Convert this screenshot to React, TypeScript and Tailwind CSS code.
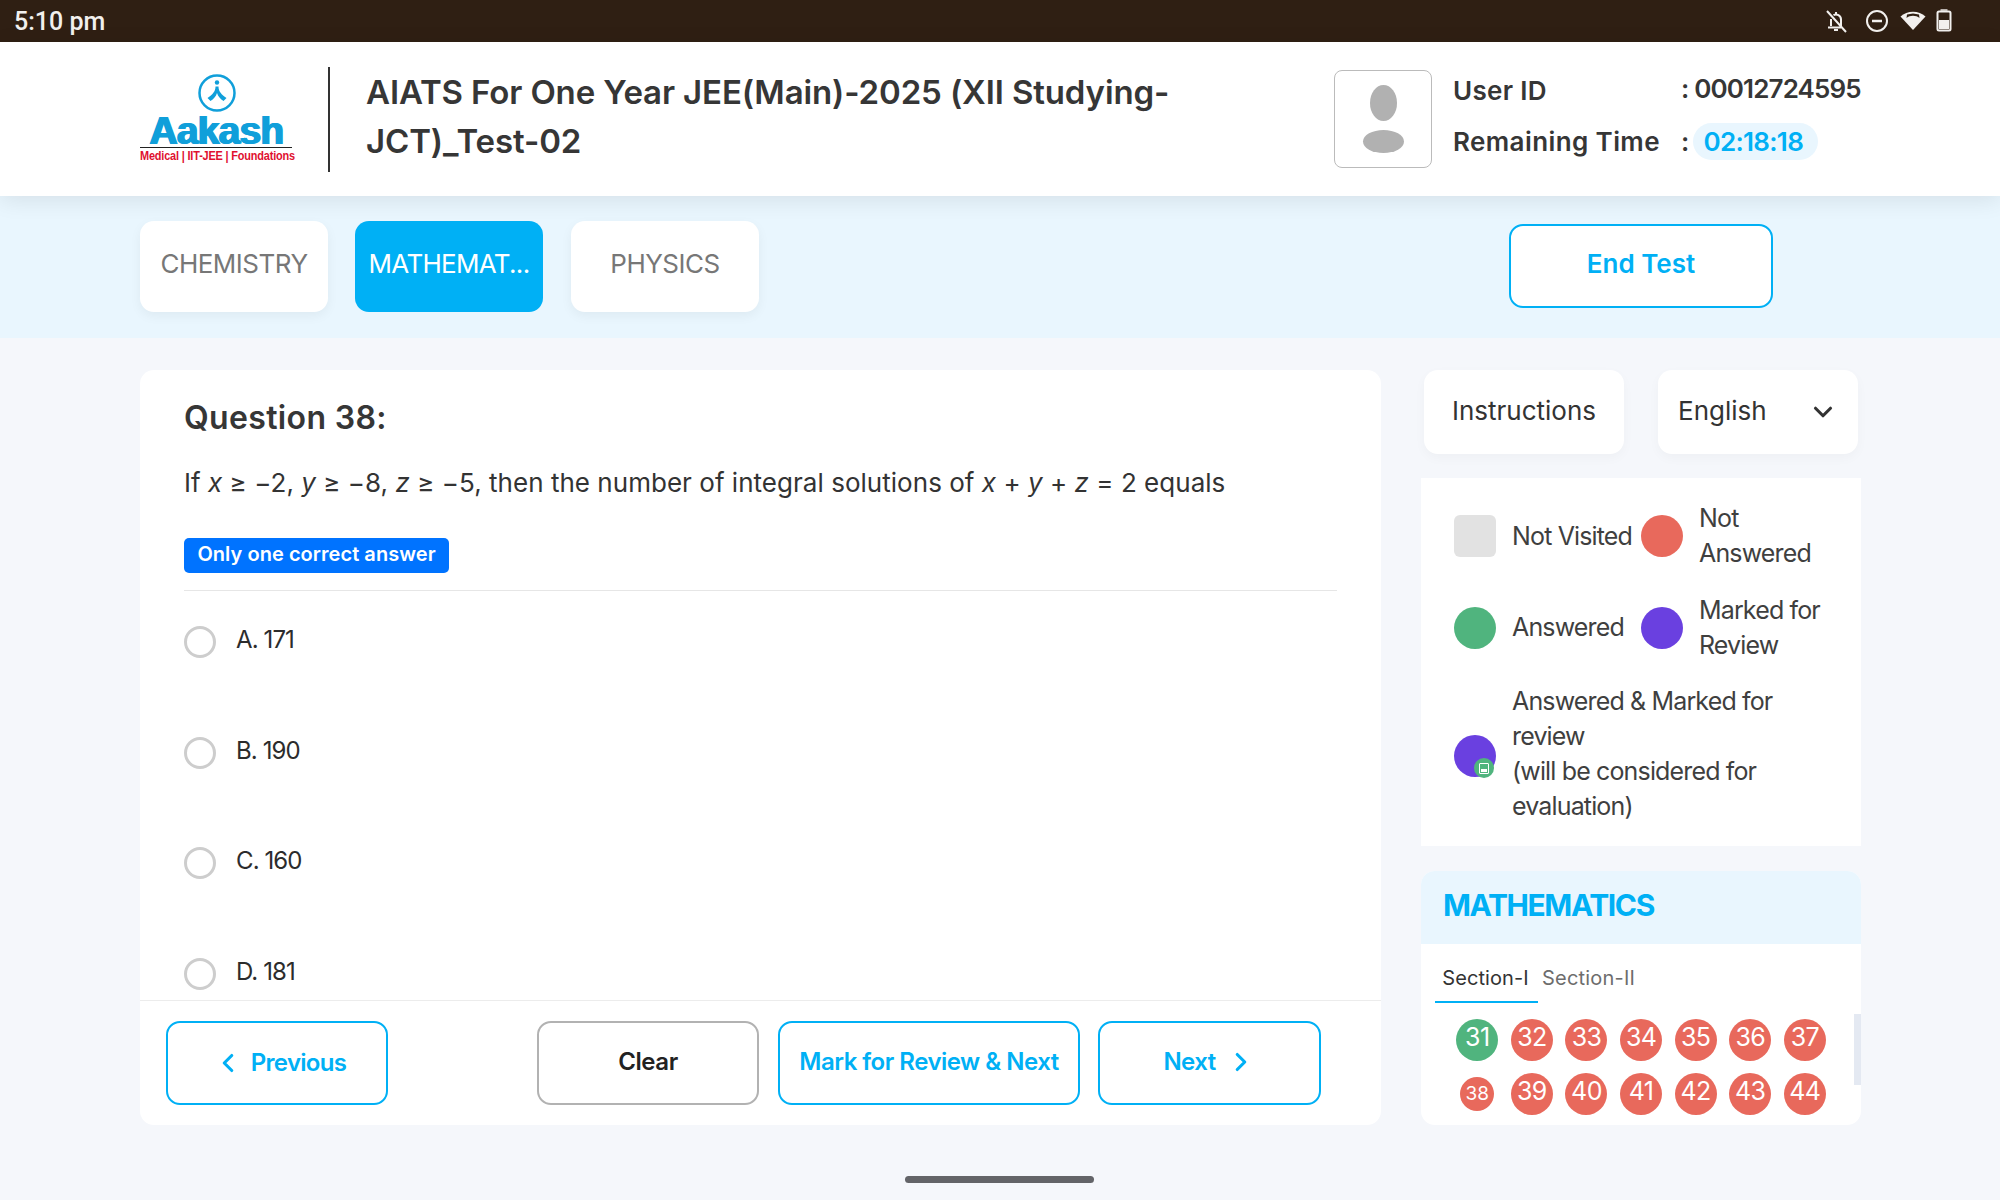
import React from "react";
import { ChevronDown, ChevronLeft, ChevronRight } from "lucide-react";

const Legend = ({ shape, text, wide }: { shape: React.ReactNode; text: React.ReactNode; wide: string }) => (
  <div className={`flex items-center ${wide}`}>
    <div className="shrink-0">{shape}</div>
    <div className="ml-[16px] text-[25px] leading-[35px] text-[#3f3f3f] tracking-[-0.85px] whitespace-nowrap">{text}</div>
  </div>
);

const Num = ({ n, c = "bg-[#e8695c]", small = false }: { n: number; c?: string; small?: boolean }) => (
  <div className="w-[54.6px] flex justify-center items-center shrink-0">
    <div className={`${small ? "w-[34px] h-[34px] text-[19px]" : "w-[42px] h-[42px] text-[25px] tracking-[-0.6px]"} ${c} rounded-full flex items-center justify-center text-white ${small ? "" : "pb-[5px]"}`}>{n}</div>
  </div>
);

const Option = ({ label }: { label: string }) => (
  <div className="flex h-[110.5px] items-start">
    <div className="w-[32px] h-[32px] rounded-full border-[3px] border-[#cdcdcd] bg-white shrink-0" />
    <div className="ml-[20px] text-[24px] leading-[30px] text-[#2c2c2c] mt-[-1px] tracking-[-0.9px]">{label}</div>
  </div>
);

export default function App() {
  return (
    <div className="w-[2000px] h-[1200px] overflow-hidden flex flex-col bg-[#f5f7fb] font-['Inter',sans-serif]">
      <div className="h-[42px] bg-[#2f1f13] flex items-center justify-between pl-[14px] pr-[48px] shrink-0">
        <span className="font-['Roboto',sans-serif] text-[25px] font-medium text-[#f2f0ee] leading-none mt-[1px]">5:10 pm</span>
        <div className="flex items-center">
          <svg width="26" height="26" viewBox="0 0 26 26" fill="none" stroke="#f2f0ee" strokeWidth="2">
            <path d="M8 18v-7M18 18v-6.500a5 5 0 0 0-7.500-4.300M5 19.500h13M11 22h4M13 4v2M4 3l19 21" />
          </svg>
          <svg className="ml-[15px]" width="26" height="26" viewBox="0 0 26 26" fill="none" stroke="#f2f0ee" strokeWidth="2">
            <circle cx="13" cy="13" r="10" /><path d="M8 13h10" strokeWidth="2.500" />
          </svg>
          <svg className="ml-[9px]" width="28" height="26" viewBox="0 0 28 26">
            <path d="M14 22 1.500 8.500C8 2 20 2 26.500 8.500Z" fill="#f2f0ee" />
            <path d="M7.500 10C11 7 17 7 20.500 10L20 6.500 14 5.500 8 6.500Z" fill="#2f1f13" />
          </svg>
          <svg className="ml-[9px]" width="16" height="26" viewBox="0 0 16 26">
            <rect x="4.500" y="1" width="7" height="3" fill="#b9b2ad" />
            <rect x="1.500" y="3.500" width="13" height="19" rx="1.500" fill="none" stroke="#f2f0ee" strokeWidth="2" />
            <rect x="3" y="12" width="10" height="9" fill="#f2f0ee" />
          </svg>
        </div>
      </div>

      <header className="relative z-10 h-[154px] bg-white shrink-0 flex items-center pl-[140px] shadow-[0_4px_22px_rgba(0,0,0,0.09)]">
        <div className="w-[152px] flex flex-col items-center mt-[1px]">
          <svg className="mt-[-3px] ml-[1px]" width="38" height="38" viewBox="0 0 38 38" fill="none">
            <circle cx="19" cy="19" r="17.500" stroke="#109fda" strokeWidth="2.500" />
            <circle cx="19" cy="8.500" r="2.200" fill="#109fda" />
            <path d="M17.500 12.500h3c0 5 3 8 8 11.500l-3 3c-3-2-5.500-4.500-6.500-8-1 3.500-3.500 6-6.500 8l-3-3c5-3.500 8-6.500 8-11.500Z" fill="#109fda" />
          </svg>
          <div className="font-['Liberation_Sans',sans-serif] font-bold text-[39px] leading-[30px] text-[#109fda] mt-[4px] tracking-[-0.8px] [text-shadow:1.4px_0_0_#109fda,-0.4px_0_0_#109fda]">Aakash</div>
          <div className="w-[152px] border-t border-[#222] mt-[1px] pt-[1px] text-[#e0102f] text-[13px] leading-[14px] whitespace-nowrap">
            <span className="block font-['Liberation_Sans',sans-serif] font-bold origin-left scale-x-[0.84] w-[185px] tracking-[-0.2px]">Medical | IIT-JEE | Foundations</span>
          </div>
        </div>
        <div className="ml-[36px] w-[2px] h-[105px] bg-[#333]" />
        <div className="ml-[36px] w-[930px] text-[33px] leading-[49px] font-semibold text-[#363636] tracking-[-0.13px] mb-[5px]">
          AIATS For One Year JEE(Main)-2025 (XII Studying-<br />JCT)_Test-02
        </div>
        <div className="ml-[38px] w-[98px] h-[98px] rounded-[8px] border border-[#bbb] flex flex-col items-center pt-[14px] shrink-0">
          <div className="w-[27px] h-[36px] rounded-[50%] bg-[#b1b1b1]" />
          <div className="mt-[9px] w-[41px] h-[23px] rounded-[50%] bg-[#b1b1b1]" />
        </div>
        <div className="ml-[21px] flex flex-col text-[26px] font-semibold text-[#363636] mb-[6px]">
          <div className="flex items-center h-[51px]">
            <span className="w-[228px] tracking-[0.3px]">User ID</span>
            <span className="mt-[-4px] tracking-[-0.85px]">: 00012724595</span>
          </div>
          <div className="flex items-center h-[51px]">
            <span className="w-[228px] tracking-[0.4px] whitespace-nowrap">Remaining Time</span>
            <span>:</span>
            <span className="ml-[4px] h-[37px] w-[125px] rounded-full bg-[#e9f6fe] text-[#00b0f5] flex items-center justify-center tracking-[-0.7px] pr-[5px]">02:18:18</span>
          </div>
        </div>
      </header>

      <div className="h-[142px] bg-[#e9f6fe] shrink-0 flex pt-[25px] pl-[140px]">
        <div className="w-[188px] h-[91px] rounded-[14px] bg-white shadow-[0_4px_12px_rgba(0,0,0,0.05)] flex items-center justify-center text-[26px] text-[#777] tracking-[-0.5px] pb-[7px]">CHEMISTRY</div>
        <div className="ml-[27px] w-[188px] h-[91px] rounded-[14px] bg-[#00b0f5] flex items-center justify-center text-[26px] text-white tracking-[-0.7px] pb-[7px]">MATHEMAT...</div>
        <div className="ml-[28px] w-[188px] h-[91px] rounded-[14px] bg-white shadow-[0_4px_12px_rgba(0,0,0,0.05)] flex items-center justify-center text-[26px] text-[#777] tracking-[-0.5px] pb-[7px]">PHYSICS</div>
        <div className="ml-[750px] mt-[3px] w-[264px] h-[84px] rounded-[14px] bg-white border-2 border-[#00b0f5] flex items-center justify-center text-[26px] font-semibold text-[#00b0f5] pb-[5px]">End Test</div>
      </div>

      <main className="flex pl-[140px] pt-[32px] items-start">
        <section className="w-[1241px] h-[755px] bg-white rounded-[14px] flex flex-col shrink-0">
          <div className="h-[630px] px-[44px] pt-[28px] overflow-hidden">
            <div className="text-[32px] leading-[40px] font-semibold text-[#363636] tracking-[0.35px]">Question 38:</div>
            <div className="mt-[27px] text-[26px] leading-[36px] text-[#333] whitespace-nowrap tracking-[0.03px]">
              If <i>x</i> ≥ −2, <i>y</i> ≥ −8, <i>z</i> ≥ −5, then the number of integral solutions of <i>x</i> + <i>y</i> + <i>z</i> = 2 equals
            </div>
            <div className="mt-[37px] w-[265px] h-[35px] rounded-[5px] bg-[#0073ff] text-white text-[20px] font-semibold flex items-center justify-center tracking-[0.05px] pb-[3px]">Only one correct answer</div>
            <div className="mt-[17px] h-[1px] bg-[#e6e6e6]" />
            <div className="mt-[35px]">
              <Option label="A. 171" />
              <Option label="B. 190" />
              <Option label="C. 160" />
              <Option label="D. 181" />
            </div>
          </div>
          <div className="border-t border-[#ececec] flex pt-[20px] pl-[26px]">
            <div className="w-[222px] h-[84px] rounded-[14px] border-2 border-[#00b0f5] flex items-center justify-center text-[24px] font-semibold text-[#00b0f5] tracking-[-0.7px] pl-[5px]">
              <ChevronLeft size={30} strokeWidth={2.5} /><span className="ml-[8px]">Previous</span>
            </div>
            <div className="ml-[149px] w-[222px] h-[84px] rounded-[14px] border-2 border-[#b2b2b2] flex items-center justify-center text-[24px] font-semibold text-[#222] tracking-[-0.4px] pb-[3px]">Clear</div>
            <div className="ml-[19px] w-[302px] h-[84px] rounded-[14px] border-2 border-[#00b0f5] flex items-center justify-center text-[24px] font-semibold text-[#00b0f5] tracking-[-0.5px] whitespace-nowrap pb-[3px]">Mark for Review &amp; Next</div>
            <div className="ml-[18px] w-[223px] h-[84px] rounded-[14px] border-2 border-[#00b0f5] flex items-center justify-center text-[24px] font-semibold text-[#00b0f5] tracking-[-0.6px] pb-[2px]">
              <span className="mr-[10px]">Next</span><ChevronRight size={30} strokeWidth={2.5} />
            </div>
          </div>
        </section>

        <aside className="ml-[40px] w-[440px] shrink-0">
          <div className="flex pl-[3px]">
            <div className="w-[200px] h-[84px] rounded-[14px] bg-white flex items-center justify-center text-[26px] text-[#333] shadow-[0_4px_12px_rgba(0,0,0,0.03)] pb-[4px]">Instructions</div>
            <div className="ml-[34px] w-[200px] h-[84px] rounded-[14px] bg-white flex items-center justify-between pl-[20px] pr-[20px] text-[26px] text-[#333] shadow-[0_4px_12px_rgba(0,0,0,0.03)]">
              <span className="pb-[4px]">English</span><ChevronDown size={30} strokeWidth={2.5} className="text-[#333]" />
            </div>
          </div>
          <div className="mt-[24px] h-[368px] bg-white pl-[33px] pt-[12px]">
            <div className="flex h-[92px] items-center">
              <Legend wide="w-[187px]" shape={<div className="w-[42px] h-[42px] rounded-[6px] bg-[#e2e2e2]" />} text="Not Visited" />
              <Legend wide="" shape={<div className="w-[42px] h-[42px] rounded-full bg-[#e8695c]" />} text={<span>Not<br />Answered</span>} />
            </div>
            <div className="flex h-[91px] items-center">
              <Legend wide="w-[187px]" shape={<div className="w-[42px] h-[42px] rounded-full bg-[#50b47e]" />} text="Answered" />
              <Legend wide="" shape={<div className="w-[42px] h-[42px] rounded-full bg-[#6a40e0]" />} text={<span>Marked for<br />Review</span>} />
            </div>
            <div className="mt-[11px]">
              <Legend wide="" shape={
                <div className="relative w-[42px] h-[42px] mt-[4px] rounded-full bg-[#6a40e0]">
                  <div className="absolute right-[2px] bottom-[-1px] w-[20px] h-[20px] rounded-full bg-[#50b47e] flex items-center justify-center">
                    <div className="w-[10px] h-[11px] rounded-[1px] border border-white bg-[#50b47e] flex flex-col justify-end pb-[1px] px-[1px]">
                      <div className="h-[3px] bg-white" />
                    </div>
                  </div>
                </div>
              } text={<span className="block">Answered &amp; Marked for<br />review<br />(will be considered for<br />evaluation)</span>} />
            </div>
          </div>
          <div className="mt-[25px] h-[254px] bg-white rounded-[14px] relative overflow-hidden">
            <div className="h-[73px] bg-[#e9f6fe] flex items-center pl-[22px] text-[30px] font-bold text-[#00b0f5] tracking-[-1.4px] pb-[5px]">MATHEMATICS</div>
            <div className="flex pl-[14px] h-[59px]">
              <div className="w-[103px] h-[59px] border-b-2 border-[#00b0f5] flex items-center justify-center text-[20px] text-[#333] tracking-[0.1px] whitespace-nowrap pt-[10px] pr-[2px]">Section-I</div>
              <div className="ml-[4px] h-[59px] flex items-center text-[20px] text-[#6d6d6d] tracking-[0.2px] whitespace-nowrap pt-[9px]">Section-II</div>
            </div>
            <div className="pl-[29px] pt-[16px] flex flex-col gap-[12px]">
              <div className="flex">
                <Num n={31} c="bg-[#50b47e]" />
                {[32, 33, 34, 35, 36, 37].map((n) => <Num key={n} n={n} />)}
              </div>
              <div className="flex h-[42px]">
                <Num n={38} small />
                {[39, 40, 41, 42, 43, 44].map((n) => <Num key={n} n={n} />)}
              </div>
            </div>
            <div className="absolute right-0 top-[143px] w-[7px] h-[71px] bg-[#e4e9f2]" />
          </div>
        </aside>
      </main>

      <div className="flex-1 flex justify-center pt-[51px] pr-[1px]">
        <div className="w-[189px] h-[7px] rounded-full bg-[#636468]" />
      </div>
    </div>
  );
}
